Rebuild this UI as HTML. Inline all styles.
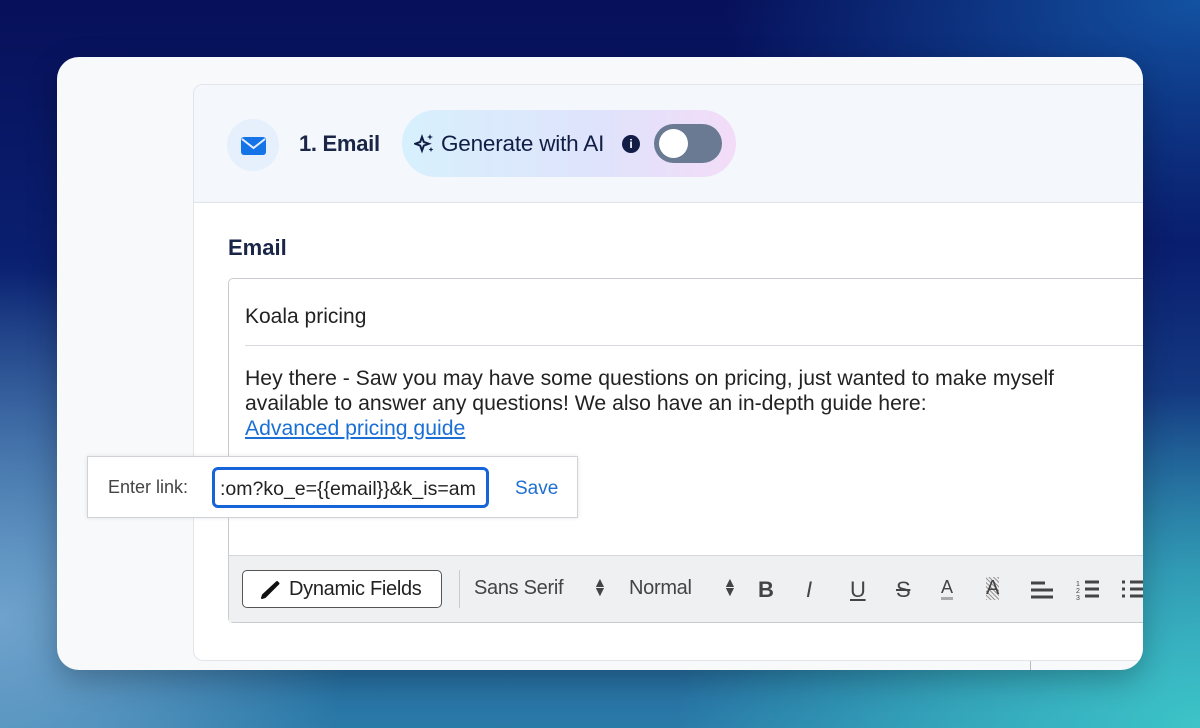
<!DOCTYPE html>
<html><head><style>
*{box-sizing:border-box;margin:0;padding:0}
body{width:1200px;height:728px;overflow:hidden;position:relative;font-family:"Liberation Sans",sans-serif;
background:
radial-gradient(ellipse 700px 450px at 100% 100%,#3cc4c8 0%,rgba(60,196,200,.6) 35%,transparent 75%),
radial-gradient(ellipse 500px 500px at 0% 85%,rgba(120,170,210,.9),transparent 70%),
radial-gradient(ellipse 600px 300px at 100% 0%,rgba(20,90,170,.9),transparent 80%),
linear-gradient(180deg,#07105a 0%,#0a1f70 35%,#1d5090 70%,#2a7aa8 100%);}
.card{position:absolute;left:57px;top:57px;width:1086px;height:613px;background:#f7f9fb;border-radius:22px;overflow:hidden;box-shadow:0 10px 30px rgba(0,0,0,.25)}
.panel{position:absolute;left:136px;top:27px;width:1000px;height:577px;background:#fff;border:1px solid #e2e5ea;border-radius:10px 0 0 10px}
.head{height:118px;background:#f4f7fb;border-bottom:1px solid #dfe3ea;border-radius:10px 0 0 0;position:relative}
.ic{position:absolute;left:33px;top:34px;width:52px;height:52px;border-radius:50%;background:#e6effc}
.t1{position:absolute;left:105px;top:46px;font-size:22px;font-weight:bold;color:#1a2547;letter-spacing:-.3px}
.ai{position:absolute;left:208px;top:25px;width:334px;height:67px;border-radius:34px;background:linear-gradient(90deg,#d7f0fd,#dfe3fb 60%,#f3dcf8)}
.ai span{position:absolute;left:39px;top:21px;font-size:22.5px;color:#111d45;letter-spacing:-.2px}
.info{position:absolute;left:220px;top:25px;width:18px;height:18px;border-radius:50%;background:#111d45;color:#fff;font-size:12px;font-weight:bold;text-align:center;line-height:18px}
.tog{position:absolute;left:252px;top:14px;width:68px;height:39px;border-radius:20px;background:#6b7a93}
.tog i{position:absolute;left:5px;top:5px;width:29px;height:29px;border-radius:50%;background:#fff}
.lbl{position:absolute;left:34px;top:150px;font-size:22px;font-weight:bold;color:#1a2547}
.ed{position:absolute;left:34px;top:193px;width:990px;height:345px;border:1.5px solid #c8ccd2;border-radius:5px 0 0 5px;background:#fff}
.subj{position:absolute;left:16px;top:26px;font-size:21px;color:#222}
.sep{position:absolute;left:16px;right:0;top:66px;border-top:1px solid #d6d9de}
.body{position:absolute;left:16px;top:87px;font-size:21.2px;line-height:25px;color:#222;white-space:nowrap}
.body a{color:#1a6fd6;text-decoration:underline}
.tb{position:absolute;left:0;right:0;bottom:0;height:67px;background:#eff0f2;border-top:1px solid #d3d6db}
.df{position:absolute;left:13px;top:14px;width:200px;height:38px;border:1.5px solid #555;border-radius:5px;background:#fff;font-size:20px;color:#222;padding:7px 0 0 46px;letter-spacing:-.3px}
.vs{position:absolute;left:230px;top:14px;height:38px;border-left:1px solid #ccc}
.tt{position:absolute;top:21px;font-size:20px;color:#444;letter-spacing:-.3px}
.pop{position:absolute;left:87px;top:456px;width:491px;height:62px;background:#fff;border:1.5px solid #cfd2d6;box-shadow:0 0 4px rgba(0,0,0,.1)}
.pop .el{position:absolute;left:20px;top:20px;font-size:18px;color:#444}
.inp{position:absolute;left:124px;top:10px;width:277px;height:41px;border:3px solid #1565d8;border-radius:6px;font-size:19.5px;color:#222;padding:8px 0 0 5px;white-space:nowrap;overflow:hidden}
.pop .sv{position:absolute;left:427px;top:21px;font-size:19px;color:#1f6fd0}
</style></head><body>
<div class="card">
 <div class="panel">
  <div class="head">
   <div class="ic"><svg width="52" height="52" viewBox="0 0 52 52"><rect x="14" y="18" width="25" height="18" rx="3" fill="#1573e8"/><path d="M15 20l11.5 9 11.5-9" stroke="#e6effc" stroke-width="2" fill="none"/></svg></div>
   <div class="t1">1. Email</div>
   <div class="ai">
    <svg style="position:absolute;left:12px;top:23px" width="22" height="22" viewBox="0 0 22 22"><path d="M8 4l1.8 5 5 1.8-5 1.8L8 17.6l-1.8-5-5-1.8 5-1.8z" fill="none" stroke="#111d45" stroke-width="2"/><path d="M16 1l.8 2.2 2.2.8-2.2.8L16 7l-.8-2.2L13 4l2.2-.8zM17 14l.7 1.8 1.8.7-1.8.7-.7 1.8-.7-1.8-1.8-.7 1.8-.7z" fill="#111d45"/></svg>
    <span>Generate with AI</span>
    <div class="info">i</div>
    <div class="tog"><i></i></div>
   </div>
  </div>
  <div class="lbl">Email</div>
  <div class="ed">
   <div class="subj">Koala pricing</div>
   <div class="sep"></div>
   <div class="body">Hey there - Saw you may have some questions on pricing, just wanted to make myself<br>available to answer any questions! We also have an in-depth guide here:<br><a>Advanced pricing guide</a></div>
   <div class="tb">
    <div class="df"><svg style="position:absolute;left:16px;top:8px" width="22" height="22" viewBox="0 0 22 22"><path d="M18 3l1.5 1.5L6 18l-3 1 1-3z" fill="#111" stroke="#111" stroke-width="2" stroke-linejoin="round"/></svg>Dynamic Fields</div>
    <div class="vs"></div>
    <div class="tt" style="left:245px">Sans Serif</div>
    <div class="tt" style="left:364px;font-size:14px;top:22px;line-height:9px">▲<br>▼</div>
    <div class="tt" style="left:400px">Normal</div>
    <div class="tt" style="left:494px;font-size:14px;top:22px;line-height:9px">▲<br>▼</div>
    <div class="tt" style="left:529px;font-weight:bold;font-size:22px">B</div>
    <div class="tt" style="left:577px;font-style:italic;font-size:22px">I</div>
    <div class="tt" style="left:621px;text-decoration:underline;font-size:22px">U</div>
    <div class="tt" style="left:667px;text-decoration:line-through;font-size:22px">S</div>
    <div class="tt" style="left:712px;font-size:18px;border-bottom:3px solid #aaa;line-height:20px">A</div>
    <div class="tt" style="left:757px;font-size:20px;background:repeating-linear-gradient(45deg,#999 0 1px,#eee 1px 3px);">A</div>
    <svg style="position:absolute;left:800px;top:24px" width="24" height="20"><path d="M2 3h14M2 10h22M2 17h22" stroke="#444" stroke-width="3"/></svg>
    <svg style="position:absolute;left:847px;top:22px" width="24" height="24"><path d="M9 4h14M9 11h14M9 18h14" stroke="#444" stroke-width="3"/><text x="0" y="8" font-size="7" fill="#444">1</text><text x="0" y="15" font-size="7" fill="#444">2</text><text x="0" y="22" font-size="7" fill="#444">3</text></svg>
    <svg style="position:absolute;left:892px;top:22px" width="24" height="24"><path d="M9 4h14M9 11h14M9 18h14M1 4h3M1 11h3M1 18h3" stroke="#444" stroke-width="3"/></svg>
   </div>
  </div>
 </div>
 <div style="position:absolute;left:973px;top:604px;height:10px;border-left:1px solid #bbb"></div>
</div>
<div class="pop">
 <div class="el">Enter link:</div>
 <div class="inp">:om?ko_e={{email}}&amp;k_is=am</div>
 <div class="sv">Save</div>
</div>
</body></html>
